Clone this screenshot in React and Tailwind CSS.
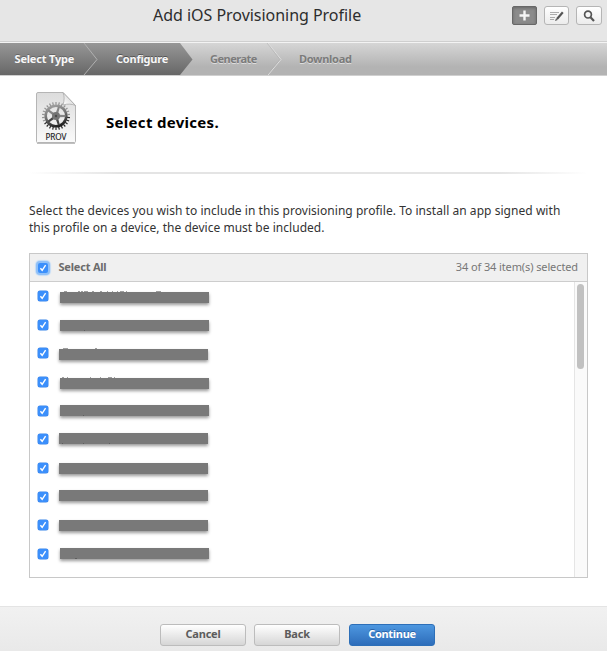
import React from "react";

const devices = [
  { bar: "mt-[10px] ml-[12px]", marks: "M4 0h3M18 0h2M21 0h2M24 0h4M32 0h2M40 0h2M47 0h1M52 0h1M57 0h1M60 0h4M66 0h1M96 0h5" },
  { bar: "mt-[9px] ml-[12px]", marks: "M24 11h1" },
  { bar: "mt-[10px] ml-[11px]", marks: "M4 0h5M36 0h2" },
  { bar: "mt-[10px] ml-[12px]", marks: "M2 0h2M7 0h1M30 0h1M40 0h1M48 0h4M54 0h1" },
  { bar: "mt-[8px] ml-[12px]", marks: "M23 11h1" },
  { bar: "mt-[8px] ml-[11px]", marks: "M3 11h1M24 11h1M50 11h1" },
  { bar: "mt-[9px] ml-[11px]", marks: "" },
  { bar: "mt-[7px] ml-[11px]", marks: "" },
  { bar: "mt-[9px] ml-[11px]", marks: "" },
  { bar: "mt-[8px] ml-[12px]", marks: "M15 11h2" },
];

function Check({ focused }) {
  return (
    <span
      className={
        "flex h-[10px] w-[10px] shrink-0 items-center justify-center rounded-[2px] bg-[#3b8ffb] " +
        (focused ? "shadow-[0_0_0_2px_#8fc0f8,0_0_1px_3px_#c3dcf7]" : "shadow-[0_0_0_0.5px_#3b85e8]")
      }
    >
      <svg width="8" height="8" viewBox="0 0 8 8" fill="none" stroke="#fff" strokeWidth="1.4">
        <path d="M1.4 4.2 3.2 6.3 6.6 1.2" />
      </svg>
    </span>
  );
}

function ProfileIcon() {
  const teeth = Array.from({ length: 26 }, (_, i) => (i * 360) / 26);
  return (
    <svg width="42" height="54" viewBox="0 0 42 54">
      <defs>
        <linearGradient id="page" x1="0" y1="0" x2="0" y2="1">
          <stop offset="0" stopColor="#dcdcdc" />
          <stop offset="1" stopColor="#fafafa" />
        </linearGradient>
        <linearGradient id="gear" gradientUnits="userSpaceOnUse" x1="16" y1="11" x2="24" y2="37">
          <stop offset="0" stopColor="#a8a8a8" />
          <stop offset="0.45" stopColor="#777" />
          <stop offset="1" stopColor="#0c0c0c" />
        </linearGradient>
        <linearGradient id="fold" x1="0" y1="1" x2="1" y2="0">
          <stop offset="0" stopColor="#fff" />
          <stop offset="0.5" stopColor="#e4e4e4" />
          <stop offset="1" stopColor="#a2a2a2" />
        </linearGradient>
      </defs>
      <path d="M2 51.500h38" stroke="#000" strokeOpacity=".25" strokeWidth="1" />
      <path d="M3 .5H28L40.500 13.500V49.500Q40.500 50.500 39.500 50.500H2.500Q1.500 50.500 1.500 49.500V2Q1.500 .5 3 .5Z" fill="url(#page)" stroke="#b5b5b5" />
      <circle cx="21" cy="24" r="10.300" fill="none" stroke="url(#gear)" strokeWidth="2.600" />
      {teeth.map((a) => (
        <path key={a} d="M21 12.800V10" stroke={a > 90 && a < 240 ? "#2a2a2a" : "#939393"} strokeWidth="1.200" transform={`rotate(${a} 21 24)`} />
      ))}
      {[18, 90, 162, 234, 306].map((a) => (
        <path key={a} d="M19.800 21 20 14.500H22L22.200 21Z" fill={a > 90 && a < 270 ? "#444" : "#858585"} transform={`rotate(${a} 21 24)`} />
      ))}
      <circle cx="21" cy="24" r="4" fill="#747474" />
      <circle cx="21" cy="24" r="1.200" fill="#4a4a4a" />
      <path d="M28 .5C29.500 4 29.500 8 28 13C33 11.500 37 12 40.500 13.500Z" fill="url(#fold)" stroke="#aaa" strokeWidth=".8" />
      <text x="21" y="47.800" textAnchor="middle" fontSize="8.200" textLength="21" fill="#222" fontFamily="Noto Sans, sans-serif" stroke="#222" strokeWidth=".15">PROV</text>
    </svg>
  );
}

function Wizard() {
  return (
    <nav className="relative h-[34px] overflow-hidden border-t border-b border-t-[#f3f3f3] border-b-[#d0d0d0] bg-linear-to-b from-[#d6d6d6] to-[#b3b3b3] to-75% text-[11px] font-bold">
      <svg className="absolute top-0 left-0" width="300" height="32" viewBox="0 0 300 32">
        <defs>
          <linearGradient id="active" x1="0" y1="0" x2="0" y2="1">
            <stop offset="0" stopColor="#979797" />
            <stop offset="1" stopColor="#676767" />
          </linearGradient>
        </defs>
        <path d="M0 0H180L192.500 16.500L180 32H0Z" fill="url(#active)" />
        <g fill="none">
          <path d="M84 0 97 16.500 84 32" stroke="#b0b0b0" />
          <path d="M268 0 281 16.500 268 32" stroke="#dedede" />
          <path d="M267 0 280 16.500 267 32" stroke="#aaa" strokeWidth=".5" />
        </g>
      </svg>
      <div className="relative flex h-full items-center pl-[14.500px] whitespace-nowrap">
        <span className="w-[101.500px] tracking-[-0.18px] text-[#f8f8f8] [text-shadow:0_-1px_0_#666]">Select Type</span>
        <span className="w-[94px] tracking-[-0.22px] text-[#f8f8f8] [text-shadow:0_-1px_0_#555]">Configure</span>
        <span className="w-[89px] tracking-[-0.5px] text-[#7b7b7b] [text-shadow:0_1px_0_#ddd]">Generate</span>
        <span className="tracking-[-0.3px] text-[#7b7b7b] [text-shadow:0_1px_0_#ddd]">Download</span>
      </div>
    </nav>
  );
}

export default function App() {
  return (
    <div className="flex h-[651px] w-[607px] flex-col overflow-hidden bg-white font-['Noto_Sans',sans-serif] text-[#333]">
      <header className="flex h-[42px] shrink-0 items-start border-b border-[#cfcfcf] bg-[#e6e6e6]">
        <h1 className="ml-[153px] w-[359px] pt-[3px] text-[16px] leading-[24px] tracking-[-0.03px] whitespace-nowrap text-[#2d2d2d]">
          Add iOS Provisioning Profile
        </h1>
        <div className="flex gap-[7px] pt-[6px]">
          <button className="flex h-[19px] w-[25px] items-center justify-center rounded-[2px] border border-[#686868] bg-[#8b8b8b] shadow-[inset_0_1px_3px_#666]">
            <svg width="11" height="11" viewBox="0 0 11 11" stroke="#f4f4f4" strokeWidth="2.400"><path d="M5.500 .5V10.500M.5 5.500H10.500" /></svg>
          </button>
          <button className="flex h-[19px] w-[25px] items-center justify-center rounded-[3px] border border-[#b5b5b5] bg-linear-to-b from-white to-[#ececec]">
            <svg width="16" height="12" viewBox="0 0 16 12" fill="none" stroke="#999">
              <path d="M1 2.500H10M1 4.500H8M1 7.500H6M1 9.500H5" strokeWidth=".8" />
              <path d="M8 9 13.800 2.300" stroke="#555" strokeWidth="2.200" />
              <path d="M6 11 7 8.400 8.700 9.900Z" fill="#555" stroke="none" />
            </svg>
          </button>
          <button className="flex h-[19px] w-[26px] items-center justify-center rounded-[3px] border border-[#b5b5b5] bg-linear-to-b from-white to-[#ececec]">
            <svg width="12" height="12" viewBox="0 0 12 12" fill="none" stroke="#555">
              <circle cx="5" cy="4.600" r="3.400" strokeWidth="1.700" />
              <path d="M7.500 7.200 11 11" strokeWidth="2.200" />
            </svg>
          </button>
        </div>
      </header>
      <Wizard />
      <section className="flex h-[96px] shrink-0 items-start pt-[16px] pl-[35px]">
        <ProfileIcon />
        <h2 className="mt-[19px] ml-[29px] text-[15px] leading-[22px] font-bold tracking-[0.3px] whitespace-nowrap text-black">Select devices.</h2>
      </section>
      <div className="ml-[29px] flex h-[2px] w-[558px] shrink-0">
        <span className="w-[90px] bg-linear-to-r from-transparent to-[#e4e4e4]" />
        <span className="flex-1 bg-[#e4e4e4]" />
        <span className="w-[90px] bg-linear-to-l from-transparent to-[#e4e4e4]" />
      </div>
      <div className="mt-[28px] ml-[29px] h-[34px] shrink-0 text-[12px] leading-[17px] whitespace-nowrap">
        <p className="tracking-[0.045px]">Select the devices you wish to include in this provisioning profile. To install an app signed with</p>
        <p className="tracking-[0.03px]">this profile on a device, the device must be included.</p>
      </div>
      <section className="mt-[17px] ml-[29px] flex h-[325px] w-[559px] shrink-0 flex-col border border-[#c8c8c8]">
        <div className="flex h-[28px] shrink-0 items-center border-b border-[#cdcdcd] bg-[#f0f0f0] pr-[9px] pl-[8px] text-[11px] whitespace-nowrap">
          <Check focused />
          <span className="ml-[10.500px] font-bold tracking-[-0.2px] text-[#6c6c6c]">Select All</span>
          <span className="ml-auto tracking-[-0.11px] text-[#777]">34 of 34 item(s) selected</span>
        </div>
        <div className="flex min-h-0 flex-1">
          <ul className="flex-1 pl-[8px]">
            {devices.map((d, i) => (
              <li key={i} className="flex h-[28.670px] items-start">
                <span className="mt-[9px]"><Check /></span>
                <span className={"h-[11px] w-[149px] bg-[#797979] shadow-[0_2px_3px_rgba(0,0,0,0.4)] " + d.bar}>
                  <svg className="-mt-px block overflow-visible" width="149" height="12" viewBox="0 -0.500 149 12" stroke="#444" strokeOpacity=".5" strokeWidth="1"><path d={d.marks} /></svg>
                </span>
              </li>
            ))}
          </ul>
          <div className="w-[13px] border-l border-[#e5e5e5] bg-[#fafafa] pt-[2px] pl-[2px]">
            <div className="h-[85px] w-[7px] rounded-full bg-[#c1c1c1]" />
          </div>
        </div>
      </section>
      <footer className="mt-auto flex h-[45px] shrink-0 items-start gap-[8px] border-t border-[#e4e4e4] bg-linear-to-b from-[#f1f1f1] to-[#e9e9e9] pt-[17px] pl-[160px] text-[11px] leading-[18px] font-bold tracking-[-0.2px]">
        <button className="h-[22px] w-[86px] rounded-[3px] border border-[#bcbcbc] bg-linear-to-b from-white to-[#d6d6d6] pb-[2px] text-[#5c5c5c]">Cancel</button>
        <button className="h-[22px] w-[86px] rounded-[3px] border border-[#bcbcbc] bg-linear-to-b from-white to-[#d6d6d6] pb-[2px] text-[#5c5c5c]">Back</button>
        <button className="ml-[1px] h-[22px] w-[86px] rounded-[3px] border border-[#2d6fb8] bg-linear-to-b from-[#4d97e0] to-[#2e6dba] pb-[2px] tracking-[-0.3px] text-white [text-shadow:0_-1px_0_#2a62a5]">Continue</button>
      </footer>
    </div>
  );
}
